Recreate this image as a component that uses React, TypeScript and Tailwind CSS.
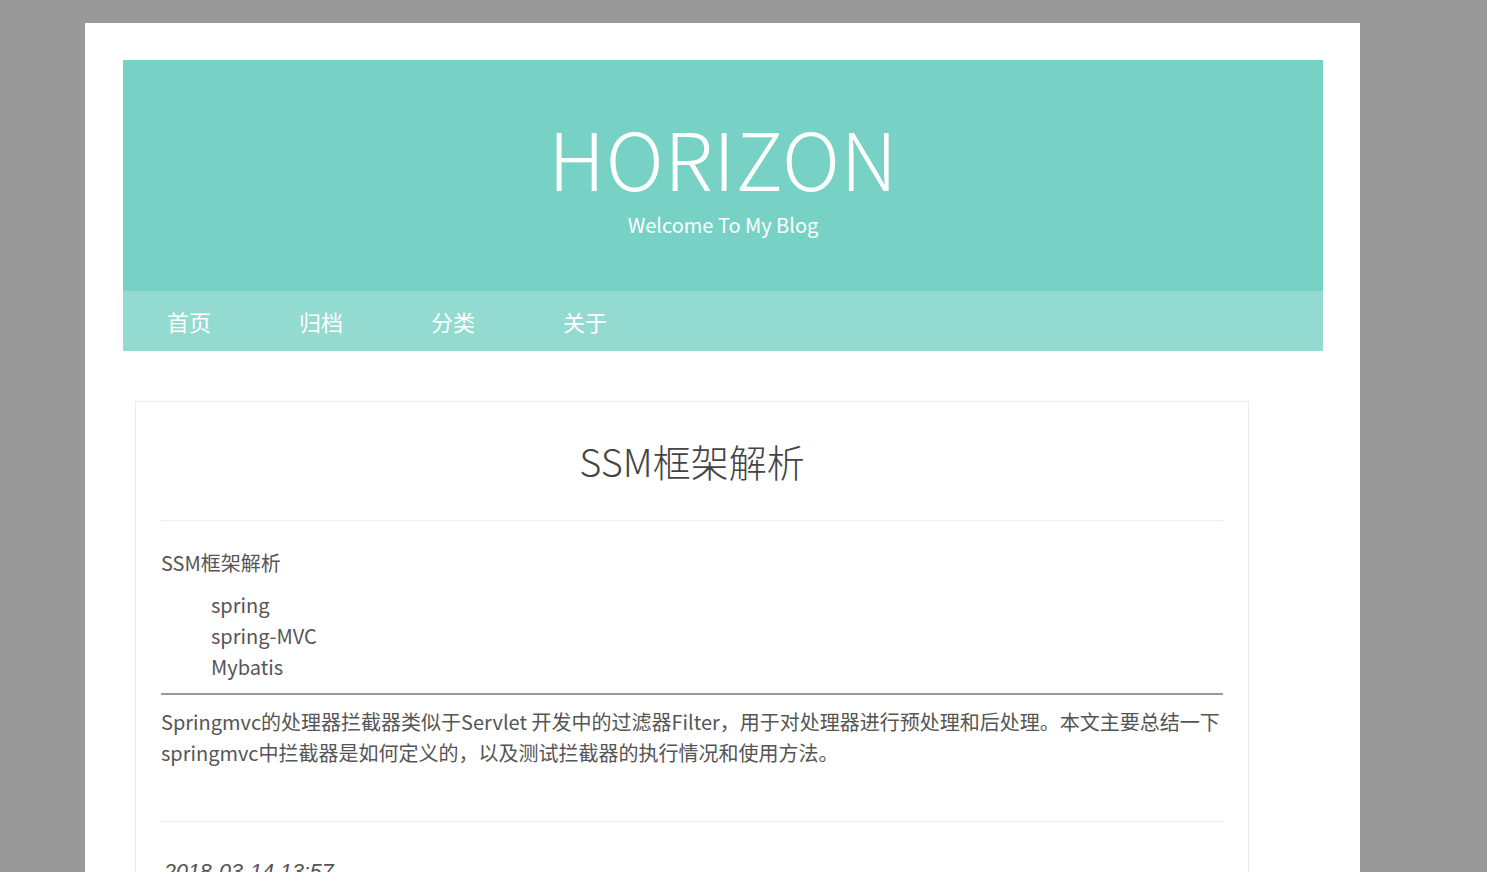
const navItems = ["首页", "归档", "分类", "关于"];

const font = "font-['Microsoft_YaHei','Noto_Sans_CJK_SC','Open_Sans',sans-serif]";

const App = () => {
  return (
    <div className={`min-h-screen bg-[#999999] pt-[23px] ${font}`}>
      <div className="ml-[85px] w-[1275px] bg-white pl-[38px] pr-[37px] pt-[37px] pb-10">
        {/* Header */}
        <header>
          <div className="flex h-[231px] flex-col items-center bg-[#77d2c5] text-white">
            <h1 className="mt-[56px] text-[80px] leading-[80px] font-extralight tracking-[0.5px]">HORIZON</h1>
            <p className="mt-[15px] text-[20px] leading-[28px]">Welcome To My Blog</p>
          </div>
          <nav className="flex h-[60px] items-center bg-[#93dbd0]">
            {navItems.map((item) => (
              <a key={item} href="#" className="w-[132px] text-center text-[22px] text-white">
                {item}
              </a>
            ))}
          </nav>
        </header>

        {/* Post card */}
        <article className="mt-[50px] ml-[12px] w-[1114px] border border-[#ececec] px-[25px] pt-[30px] pb-6 text-[#555]">
          <h2 className="text-center text-[38px] leading-[57px] font-light text-[#444]">SSM框架解析</h2>
          <hr className="mt-[31px] border-t border-[#eeeeee]" />
          <div className="mt-[26px] text-[20px] leading-[31px]">
            <p>SSM框架解析</p>
            <ul className="mt-[11px] pl-[50px]">
              <li>spring</li>
              <li>spring-MVC</li>
              <li>Mybatis</li>
            </ul>
            <hr className="mt-[11px] border-t-2 border-[#9a9a9a]" />
            <p className="mt-[11px]">
              Springmvc的处理器拦截器类似于Servlet 开发中的过滤器Filter，用于对处理器进行预处理和后处理。本文主要总结一下springmvc中拦截器是如何定义的，以及测试拦截器的执行情况和使用方法。
            </p>
          </div>
          <hr className="mt-[53px] border-t border-[#eeeeee]" />
          <p className="mt-[34px] pl-[3px] font-['Liberation_Sans',sans-serif] text-[21.5px] italic text-[#555]">2018-03-14 13:57</p>
        </article>
      </div>
    </div>
  );
};

export default App;
